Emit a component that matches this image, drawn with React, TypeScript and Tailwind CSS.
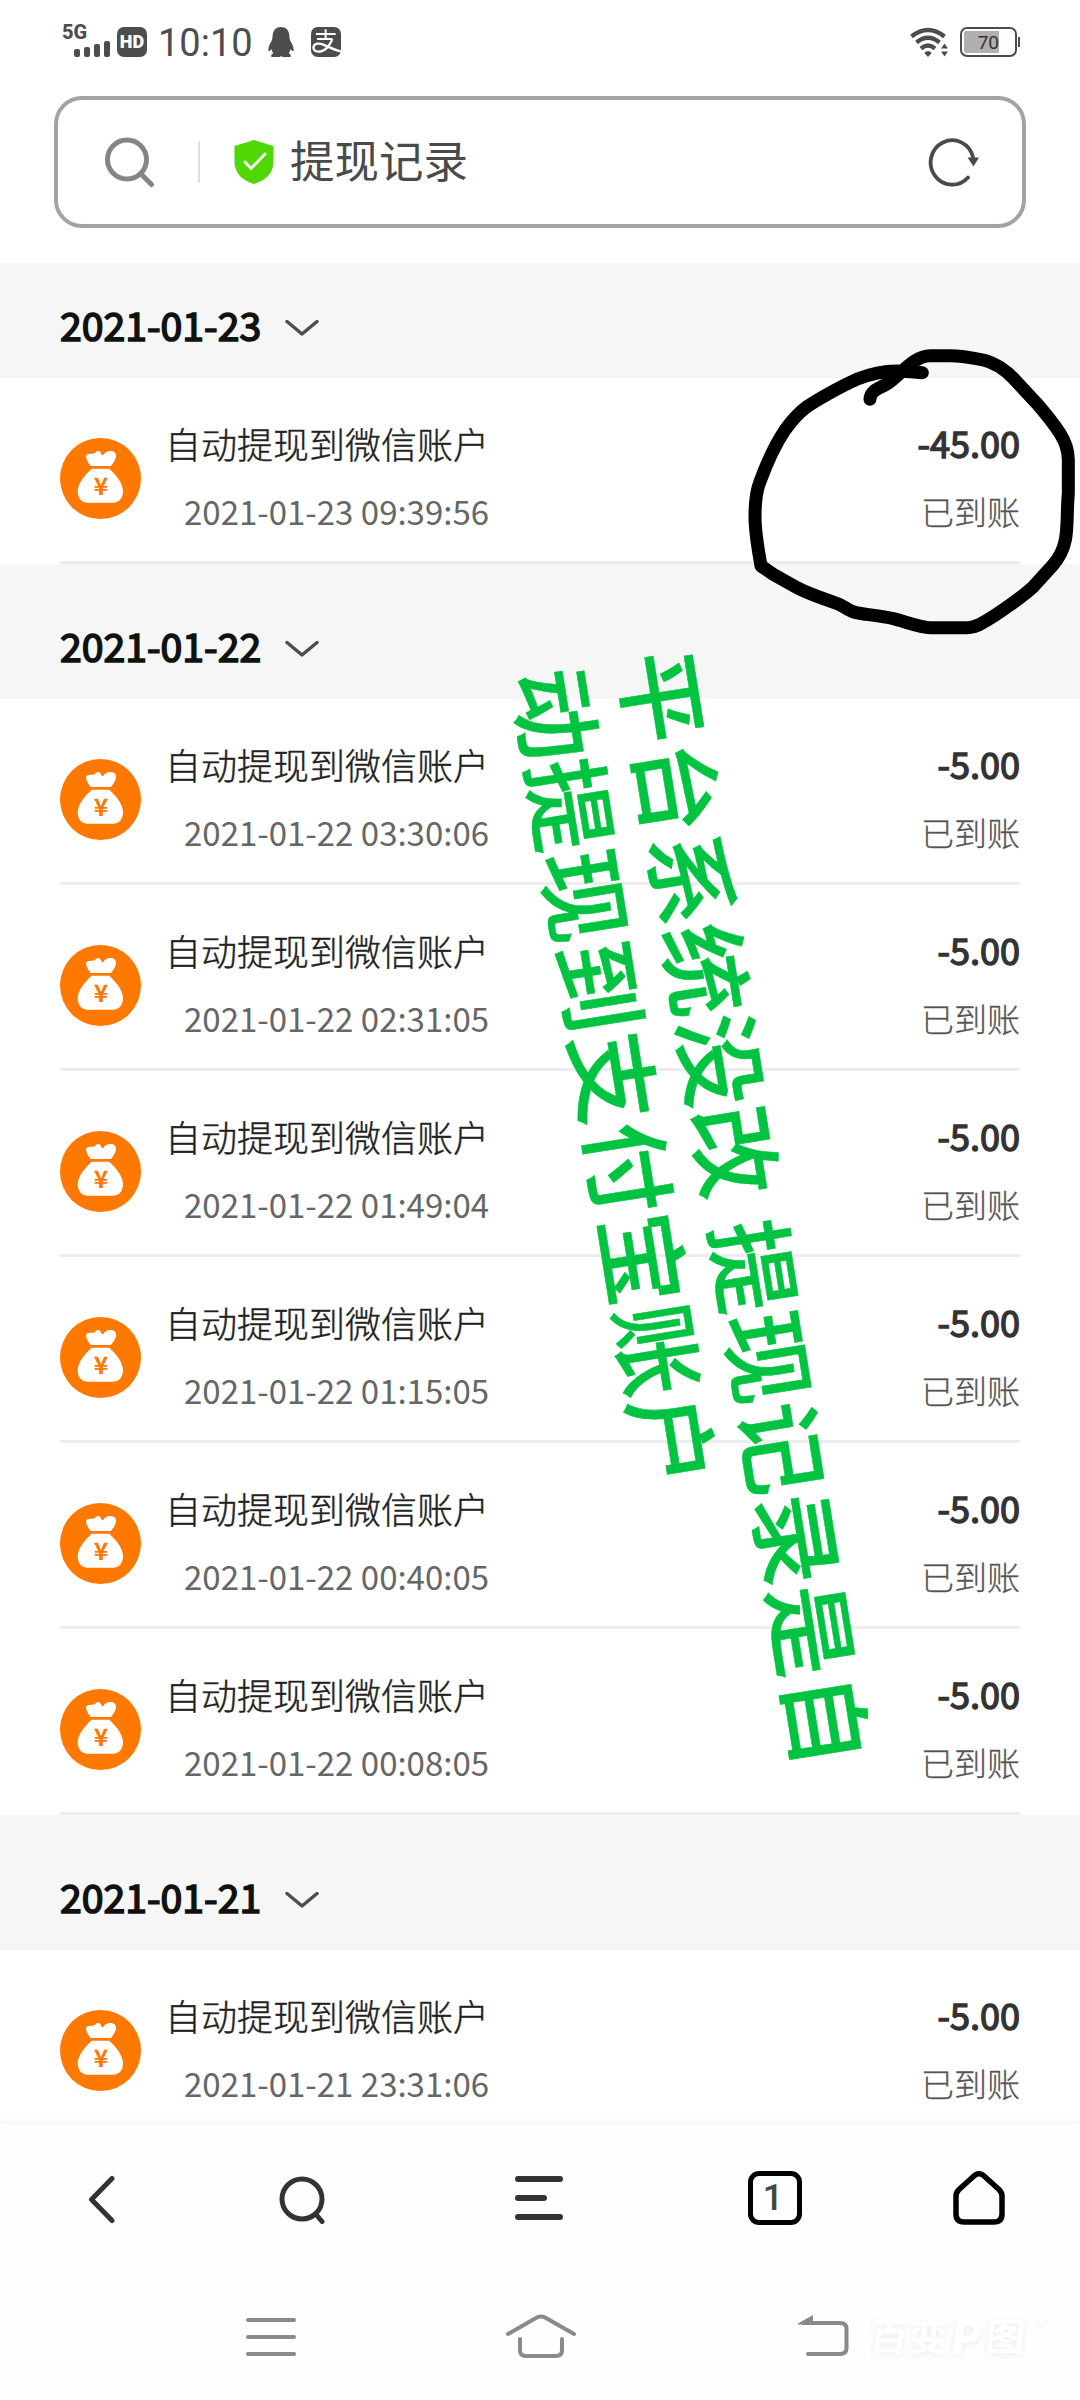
import React from 'react';

interface RecordItem {
  time: string;
  amount: string;
}

interface DayGroup {
  date: string;
  records: RecordItem[];
}

const groups: DayGroup[] = [
  {
    date: '2021-01-23',
    records: [{ time: '2021-01-23 09:39:56', amount: '-45.00' }],
  },
  {
    date: '2021-01-22',
    records: [
      { time: '2021-01-22 03:30:06', amount: '-5.00' },
      { time: '2021-01-22 02:31:05', amount: '-5.00' },
      { time: '2021-01-22 01:49:04', amount: '-5.00' },
      { time: '2021-01-22 01:15:05', amount: '-5.00' },
      { time: '2021-01-22 00:40:05', amount: '-5.00' },
      { time: '2021-01-22 00:08:05', amount: '-5.00' },
    ],
  },
  {
    date: '2021-01-21',
    records: [{ time: '2021-01-21 23:31:06', amount: '-5.00' }],
  },
];

const PenguinIcon = () => (
  <svg className="ml-[15px] mt-[2px]" width="26" height="30" viewBox="0 0 78 90" fill="#4d4d4d">
    <path d="M39 0C54 0 63 10 64 25C64 31 65 36 67 42C72 49 78 61 77 73C73 73 69 68 68 66C67 71 65 75 62 79C67 81 69 84 68 90H44C42 87 36 87 34 90H10C9 84 11 81 16 79C13 75 11 71 10 66C9 68 5 73 1 73C0 61 6 49 11 42C13 36 14 31 14 25C15 10 24 0 39 0Z" />
  </svg>
);

const PayIcon = () => (
  <svg className="ml-[17px] mt-[2px]" width="30" height="30" viewBox="0 0 90 90">
    <rect width="90" height="90" rx="20" fill="#4d4d4d" />
    <g fill="none" stroke="#fff" strokeWidth="6">
      <path d="M15 21H74M44 7V36M18 36H64" />
      <path d="M64 36C58 54 42 74 22 74C10 74 6 66 8 58C12 48 28 48 42 55C58 62 72 70 90 73" strokeWidth="7" />
    </g>
  </svg>
);

const StatusBar = () => (
  <div className="flex h-24 shrink-0 items-start justify-between pl-[62px] pr-[60px] pt-[25px] text-[#4d4d4d]">
    <div className="flex items-start">
      <div className="relative h-8 w-[50px]">
        <span className="absolute left-0 top-0 font-['Roboto',sans-serif] text-[20px] font-extrabold leading-[15px]">5G</span>
        <div className="absolute bottom-0 right-[2px] flex items-end gap-[4px]">
          <i className="h-[8px] w-[6px] rounded-[2px] bg-[#4d4d4d]" />
          <i className="h-[10px] w-[6px] rounded-[2px] bg-[#4d4d4d]" />
          <i className="h-[13px] w-[6px] rounded-[2px] bg-[#4d4d4d]" />
          <i className="h-[16px] w-[6px] rounded-[2px] bg-[#4d4d4d]" />
        </div>
      </div>
      <div className="ml-[5px] mt-[2px] flex h-[30px] w-[30px] items-center justify-center rounded-[7px] bg-[#4d4d4d] font-['Roboto',sans-serif] text-[18px] font-black leading-none text-white">
        HD
      </div>
      <span className="ml-[11px] w-[95px] whitespace-nowrap font-['Roboto',sans-serif] text-[38px] leading-[36px]">10:10</span>
      <PenguinIcon />
      <PayIcon />
    </div>
    <div className="flex items-start pt-[2px]">
      <svg width="40" height="30" viewBox="0 0 40 30" fill="none" stroke="#4d4d4d" strokeWidth="4.400">
        <path d="M1.5 9.500Q18 -3.500 34.500 9.500" />
        <path d="M6.500 15.500Q18 6 29.500 15.500" />
        <path d="M11 21.500Q18 15.500 25 21.500" />
        <path d="M14.300 26Q18 22 21.700 26L18 30Z" fill="#4d4d4d" stroke="none" />
        <path d="M31 21.500h7l-3.500-5zM31 24.500h7l-3.500 5z" fill="#4d4d4d" stroke="none" />
      </svg>
      <div className="ml-[10px] h-[30px] w-[57px] rounded-[7px] border-[2.500px] border-[#4d4d4d] p-[2px]">
        <div className="h-full w-[35px] rounded-l-[2px] bg-[#b0b0b0] text-right font-['Roboto',sans-serif] text-[19px] leading-[23px] text-[#333]">
          70
        </div>
      </div>
      <div className="ml-[1px] mt-[10px] h-[10px] w-[2px] bg-[#4d4d4d]" />
    </div>
  </div>
);

const SearchBar = () => (
  <div className="mx-[54px] flex h-[132px] shrink-0 items-center rounded-[28px] border-4 border-[#a3a3a3] pl-[46px] pr-[42px]">
    <svg width="52" height="52" viewBox="0 0 52 52" fill="none" stroke="#858585" strokeWidth="5" strokeLinecap="round">
      <circle cx="23" cy="23.500" r="19.500" />
      <path d="M37 38l10.500 10.500" />
    </svg>
    <div className="ml-[42px] h-[42px] w-[2px] bg-[#e0e0e0]" />
    <svg className="ml-[34px]" width="40" height="44" viewBox="0 0 40 44">
      <path d="M20 0L39.500 6V22C39.500 34 30 41 20 44C10 41 0.500 34 0.500 22V6Z" fill="#4fd806" />
      <path d="M11 22l6 6.500L31 14" fill="none" stroke="#fff" strokeWidth="2.800" strokeLinecap="round" />
    </svg>
    <span className="mb-[5px] ml-4 text-[44.500px] leading-none text-[#4a4a4a]">提现记录</span>
    <svg className="ml-auto" width="54" height="50" viewBox="0 0 54 50">
      <path d="M47 20A21.500 22.200 0 1 0 42 40.500" fill="none" stroke="#4a4a4a" strokeWidth="3.800" strokeLinecap="round" />
      <path d="M41.500 20.500h11.500l-5.500 9z" fill="#4a4a4a" />
    </svg>
  </div>
);

const MoneyBag = () => (
  <svg className="mt-[60px] h-[81px] w-[81px] shrink-0" viewBox="60 54 243 243">
    <circle cx="181.500" cy="175.500" r="121.500" fill="#ff7800" />
    <path
      d="M152 138C144 128 138 118 138 107C144 99 156 103 164 100C170 92 176 91 181 96C184 101 185 107 189 106C194 98 201 93 210 93C222 93 229 98 228 111C226 121 219 130 213 138Z"
      fill="#fff"
    />
    <path d="M155 146H208C225 162 249 188 249 214C249 236 236 248 220 248H142C126 248 113 236 113 214C113 188 138 162 155 146Z" fill="#fff" />
    <text x="183" y="225" textAnchor="middle" className="font-['Noto_Sans_CJK_SC',sans-serif] text-[74px] font-bold" fill="#ff7800">
      ¥
    </text>
  </svg>
);

const DateHeader = ({ date }: { date: string }) => (
  <div className="flex h-[135px] items-end bg-[#f6f6f6] pb-[30px] pl-[60px]">
    <span className="text-[39.200px] leading-[48px] text-[#111] [-webkit-text-stroke:1.600px_#111]">{date}</span>
    <svg className="mb-[11px] ml-[24px]" width="34" height="18" viewBox="0 0 34 18">
      <path d="M2 2.500L17 15L32 2.500" fill="none" stroke="#4b4e54" strokeWidth="3.500" strokeLinecap="round" strokeLinejoin="round" />
    </svg>
  </div>
);

const RecordRow = ({ time, amount }: RecordItem) => (
  <div className="mx-[60px] flex h-[186px] items-start border-b-[3px] border-[#ededed]">
    <MoneyBag />
    <div className="ml-[24px] flex flex-col pt-[41px]">
      <span className="text-[36px] font-light leading-[48px] text-[#222] [-webkit-text-stroke:0.400px_#222]">自动提现到微信账户</span>
      <span className="ml-[19px] mt-[20px] text-[33px] leading-[48px] text-[#666]">{time}</span>
    </div>
    <div className="ml-auto flex flex-col items-end pt-[40px]">
      <span className="text-[36px] leading-[48px] text-[#333] [-webkit-text-stroke:1.400px_#333]">{amount}</span>
      <span className="mt-[21px] text-[33px] font-light leading-[48px] text-[#555] [-webkit-text-stroke:0.300px_#555]">已到账</span>
    </div>
  </div>
);

const BrowserBar = () => (
  <div className="flex h-[150px] shrink-0 items-center bg-[#fefefe] shadow-[0_-1px_6px_rgba(0,0,0,0.06)]">
    <svg className="ml-[88px]" width="28" height="50" viewBox="0 0 28 50" fill="none" stroke="#333" strokeWidth="5" strokeLinecap="round" strokeLinejoin="round">
      <path d="M24 4.500L3.500 25.500L24 46.500" />
    </svg>
    <svg className="ml-[162px]" width="50" height="50" viewBox="0 0 50 50" fill="none" stroke="#333" strokeWidth="5" strokeLinecap="round">
      <circle cx="24" cy="25" r="20" />
      <path d="M38.500 41l5.500 6.500" />
    </svg>
    <div className="mb-[2px] ml-[187px] flex w-12 flex-col gap-[13px]">
      <i className="h-[6px] w-12 rounded-full bg-[#333]" />
      <i className="h-[6px] w-8 rounded-full bg-[#333]" />
      <i className="h-[6px] w-12 rounded-full bg-[#333]" />
    </div>
    <div className="mb-[2px] ml-[185px] flex h-[54px] w-[54px] items-center justify-center rounded-[11px] border-[5px] border-black pr-[4px] font-['Roboto',sans-serif] text-[36px] font-medium leading-none text-[#444]">
      1
    </div>
    <svg className="mb-[2px] ml-[150px]" width="54" height="54" viewBox="0 0 54 54" fill="none" stroke="#000" strokeWidth="5.500" strokeLinejoin="round">
      <path d="M22.500 4.500Q27 1 31.500 4.500L47 18.500Q50 21.500 50 25V43Q50 51 42 51H12Q4 51 4 43V25Q4 21.500 7 18.500Z" />
    </svg>
  </div>
);

const SystemNav = () => (
  <div className="flex h-[126px] shrink-0 items-start bg-[#fefefe] pt-[40px]">
    <div className="ml-[246px] mt-[4px] flex flex-col gap-[13px]">
      <i className="h-[4px] w-[50px] rounded-full bg-[#8a8a8a]" />
      <i className="h-[4px] w-[50px] rounded-full bg-[#8a8a8a]" />
      <i className="h-[4px] w-[50px] rounded-full bg-[#8a8a8a]" />
    </div>
    <svg className="ml-[209px]" width="72" height="46" viewBox="0 0 72 46" fill="none" stroke="#8a8a8a" strokeWidth="4" strokeLinecap="round">
      <path d="M3 20L31 4Q36 1 41 4L69 20" />
      <path d="M15 25V36Q15 42 21 42H51Q57 42 57 36V25" />
    </svg>
    <svg className="ml-[220px]" width="53" height="46" viewBox="0 0 53 46" fill="none" stroke="#8a8a8a" strokeWidth="4" strokeLinecap="round">
      <path d="M6 9H43Q49.500 9 49.500 15V34Q49.500 40 43 40H11" />
      <path d="M1 9.500L16 1V10.500H1Z" fill="#8a8a8a" stroke="none" />
    </svg>
    <div className="ml-[20px] flex items-start text-white [text-shadow:0_2px_7px_rgba(0,0,0,0.07)]">
      <span className="-skew-x-6 text-[39px] font-bold leading-[40px]">百变</span>
      <span className="-skew-x-6 px-[3px] text-[46px] font-black leading-[40px]">P</span>
      <span className="-skew-x-6 text-[39px] font-bold leading-[40px]">图</span>
      <span className="ml-[8px] text-[20px] leading-[10px]">✦</span>
    </div>
  </div>
);

const App: React.FC = () => {
  return (
    <div className="relative flex h-[2400px] w-[1080px] flex-col overflow-hidden bg-white font-['Noto_Sans_CJK_SC',sans-serif]">
      <StatusBar />
      <SearchBar />

      {/* Record list, scrolled a little so the first header is partly hidden */}
      <div className="mt-[35px] h-[1861px] shrink-0 overflow-hidden">
        <div className="-mt-[20px]">
          {groups.map((group) => (
            <section key={group.date}>
              <DateHeader date={group.date} />
              {group.records.map((record) => (
                <RecordRow key={record.time} {...record} />
              ))}
            </section>
          ))}
        </div>
      </div>

      <BrowserBar />
      <SystemNav />

      {/* Hand-drawn ring around the first amount */}
      <svg className="absolute left-[700px] top-[330px]" width="380" height="320" viewBox="0 0 1140 960">
        <path
          d="M510 208C511 180 540 175 560 162C600 137 640 77 690 77H750C780 77 820 84 850 90C885 98 920 124 940 145L1010 220C1030 243 1060 280 1080 310C1098 338 1105 365 1105 390V490C1100 545 1104 590 1096 630C1090 660 1075 687 1058 706L1000 770C970 798 890 855 850 877C835 886 820 893 800 893H690C660 893 610 873 580 866C540 857 490 853 465 847C445 842 430 827 410 820C360 803 310 785 280 767L220 733L183 708C175 660 165 610 165 560C165 510 172 475 180 455C200 400 225 345 255 300C275 272 292 252 318 232C350 210 420 170 470 148C500 136 550 123 590 123C620 124 640 126 667 128"
          fill="none"
          stroke="#000"
          strokeWidth="39"
          strokeLinecap="round"
          strokeLinejoin="round"
        />
      </svg>

      {/* Tilted green note */}
      <div className="absolute left-[713px] top-[642px] origin-top-left rotate-[80.900deg] whitespace-nowrap text-[92px] font-medium leading-[108px] text-[#00c341] [-webkit-text-stroke:0.500px_#00c341] [word-spacing:4px]">
        <p>平台系统没改 提现记录是自</p>
        <p>动提现到支付宝账户</p>
      </div>
    </div>
  );
};

export default App;
